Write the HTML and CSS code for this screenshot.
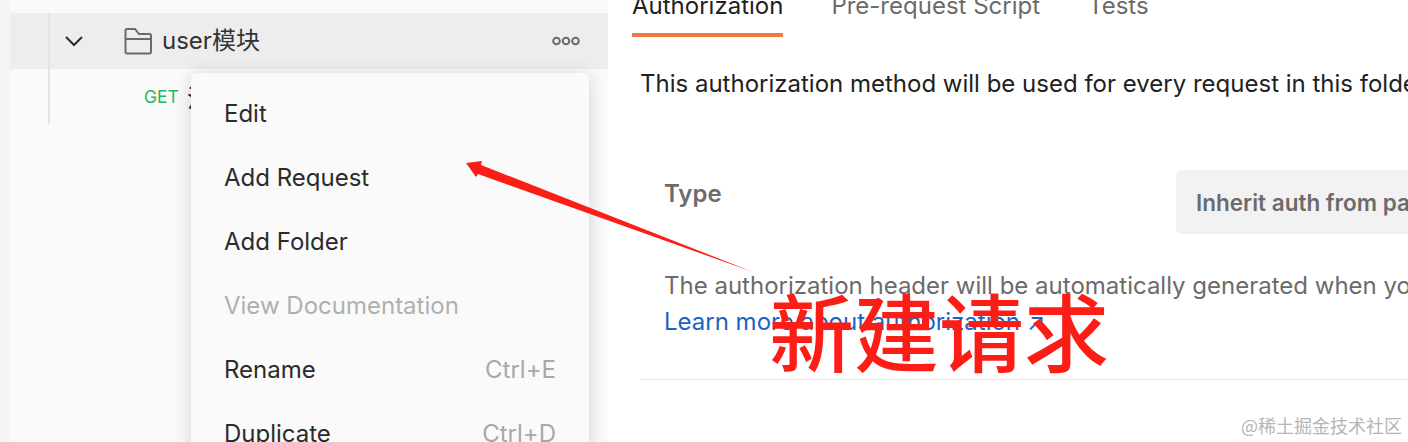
FILE: index.html
```html
<!DOCTYPE html>
<html lang="zh-CN">
<head>
<meta charset="utf-8">
<title>Postman folder menu</title>
<link rel="stylesheet" href="styles.css">
</head>
<body>
<div class="app">
  <aside class="sidebar">
    <div class="tree">
      <div class="row-top"></div>
      <div class="folder-row">
        <svg class="chevron" width="20" height="12" viewBox="0 0 20 12"><path d="M2 2l8 8 8-8" fill="none" stroke="#2b2b2b" stroke-width="2"/></svg>
        <svg class="folder" width="28" height="28" viewBox="0 0 28 28"><path d="M1.500 25V3.500A1.500 1.500 0 0 1 3 2H11l4 5h10.500A1.500 1.500 0 0 1 27 8.500V25a1.500 1.500 0 0 1-1.500 1.500H3A1.500 1.500 0 0 1 1.500 25zM1.500 12h25.500" fill="none" stroke="#6b6b6b" stroke-width="2"/></svg>
        <span class="folder-name">user模块</span>
        <svg class="more" width="28" height="10" viewBox="0 0 28 10"><g fill="none" stroke="#6b6b6b" stroke-width="2"><circle cx="4.500" cy="5" r="3.300"/><circle cx="14" cy="5" r="3.300"/><circle cx="23.500" cy="5" r="3.300"/></g></svg>
      </div>
      <div class="request-row">
        <span class="method">GET</span>
        <span class="request-name">注册</span>
      </div>
    </div>
    <div class="menu">
      <div class="menu-item">Edit</div>
      <div class="menu-item">Add Request</div>
      <div class="menu-item">Add Folder</div>
      <div class="menu-item disabled">View Documentation</div>
      <div class="menu-item">Rename<span class="shortcut">Ctrl+E</span></div>
      <div class="menu-item">Duplicate<span class="shortcut">Ctrl+D</span></div>
    </div>
  </aside>
  <main class="content">
    <nav class="tabs">
      <span class="tab active">Authorization</span>
      <span class="tab">Pre-request Script</span>
      <span class="tab">Tests</span>
    </nav>
    <p class="intro">This authorization method will be used for every request in this folder. You can override this by specifying one in the request.</p>
    <section class="auth">
      <div class="auth-head">
        <span class="type-label">Type</span>
        <div class="select">Inherit auth from parent</div>
      </div>
      <p class="note">The authorization header will be automatically generated when you send the request.</p>
      <a class="learn">Learn more about authorization ↗</a>
    </section>
    <div class="divider"></div>
  </main>
</div>
<svg class="arrow" width="300" height="130" viewBox="0 0 300 130"><path d="M3 5L19 3 18 7 290 114 15 16 13 19z" fill="#fb1d16"/></svg>
<div class="callout">新建请求</div>
<div class="watermark">@稀土掘金技术社区</div>
</body>
</html>
```
FILE: styles.css
```css
* { box-sizing: border-box; }
html, body { margin: 0; padding: 0; }
body {
  width: 1408px;
  height: 442px;
  overflow: hidden;
  position: relative;
  background: #fff;
  font-family: Inter, "Noto Sans CJK SC", sans-serif;
  font-size: 24px;
  color: #212121;
}
.app { display: flex; height: 442px; }
.sidebar {
  position: relative;
  width: 608px;
  flex: none;
  padding-left: 10px;
  background: #f4f4f4;
  overflow: hidden;
}
.tree { height: 442px; }
.row-top {
  height: 13px;
  background: #fafafa;
  border-radius: 0 0 0 6px;
}
.folder-row {
  height: 56px;
  display: flex;
  align-items: center;
  background: #ededed;
  padding-left: 54px;
  padding-right: 28px;
}
.chevron { flex: none; margin-right: 40px; }
.folder { flex: none; margin-right: 10px; }
.folder-name { font-size: 24px; color: #333; flex: 1; line-height: 24px; }
.more { flex: none; }
.request-row {
  display: flex;
  align-items: center;
  gap: 8px;
  height: 373px;
  padding: 0 0 318px 134px;
  background: #fafafa;
  border-radius: 6px 0 0 0;
}
.method { font-size: 17.500px; color: #20b85f; }
.request-name { font-size: 24px; }
.tree::before {
  content: "";
  position: absolute;
  left: 48px;
  top: 13px;
  width: 2px;
  height: 111px;
  background: #e4e4e4;
  z-index: 1;
}
.menu {
  position: absolute;
  left: 191px;
  top: 73px;
  width: 398px;
  height: 400px;
  padding-top: 8px;
  background: #fafafa;
  border-radius: 6px;
  box-shadow: 0 2px 18px rgba(0, 0, 0, 0.16);
  z-index: 2;
}
.menu-item {
  height: 64px;
  display: flex;
  align-items: center;
  justify-content: space-between;
  padding: 0 33px;
  color: #2b2b2b;
}
.menu-item.disabled { color: #b0b0b0; }
.shortcut { color: #a8a8a8; }
.content { flex: 1; min-width: 0; overflow: hidden; }
.tabs {
  display: flex;
  gap: 48px;
  height: 37px;
  margin: -12px 0 0 24px;
  white-space: nowrap;
}
.tab { color: #6b6b6b; height: 49px; line-height: 36px; }
.tab.active { color: #212121; border-bottom: 4px solid #f07a43; }
.intro {
  margin: 44px 0 0 32px;
  white-space: nowrap;
  line-height: 29px;
  color: #212121;
}
.auth { margin: 0 0 0 56px; }
.auth-head { display: flex; align-items: flex-start; padding-top: 81px; }
.type-label { font-weight: 600; color: #6b6b6b; width: 512px; line-height: 30px; flex: none; }
.select {
  width: 400px;
  height: 64px;
  margin-top: -9px;
  padding: 17px 20px;
  background: #f2f2f2;
  border-radius: 6px;
  font-size: 22.500px;
  font-weight: 600;
  color: #6b6b6b;
  white-space: nowrap;
  line-height: 32px;
}
.note {
  margin: 37px 0 0;
  white-space: nowrap;
  line-height: 30px;
  color: #6b6b6b;
}
.learn { display: block; color: #1a63c4; line-height: 30px; margin-top: 6px; }
.divider { height: 1px; background: #e8e8e8; margin: 42px 0 0 32px; }
.arrow { position: absolute; left: 463px; top: 158px; z-index: 3; }
.callout {
  position: absolute;
  left: 769px;
  top: 279px;
  font-size: 85px;
  font-weight: 500;
  line-height: 100px;
  color: #fb1d16;
  white-space: nowrap;
  font-family: "Noto Sans CJK SC", sans-serif;
  z-index: 3;
}
.watermark {
  position: absolute;
  right: 6px;
  top: 413px;
  font-size: 18px;
  line-height: 24px;
  color: #b5b5b5;
  white-space: nowrap;
  font-family: "Noto Sans CJK SC", sans-serif;
}
```
